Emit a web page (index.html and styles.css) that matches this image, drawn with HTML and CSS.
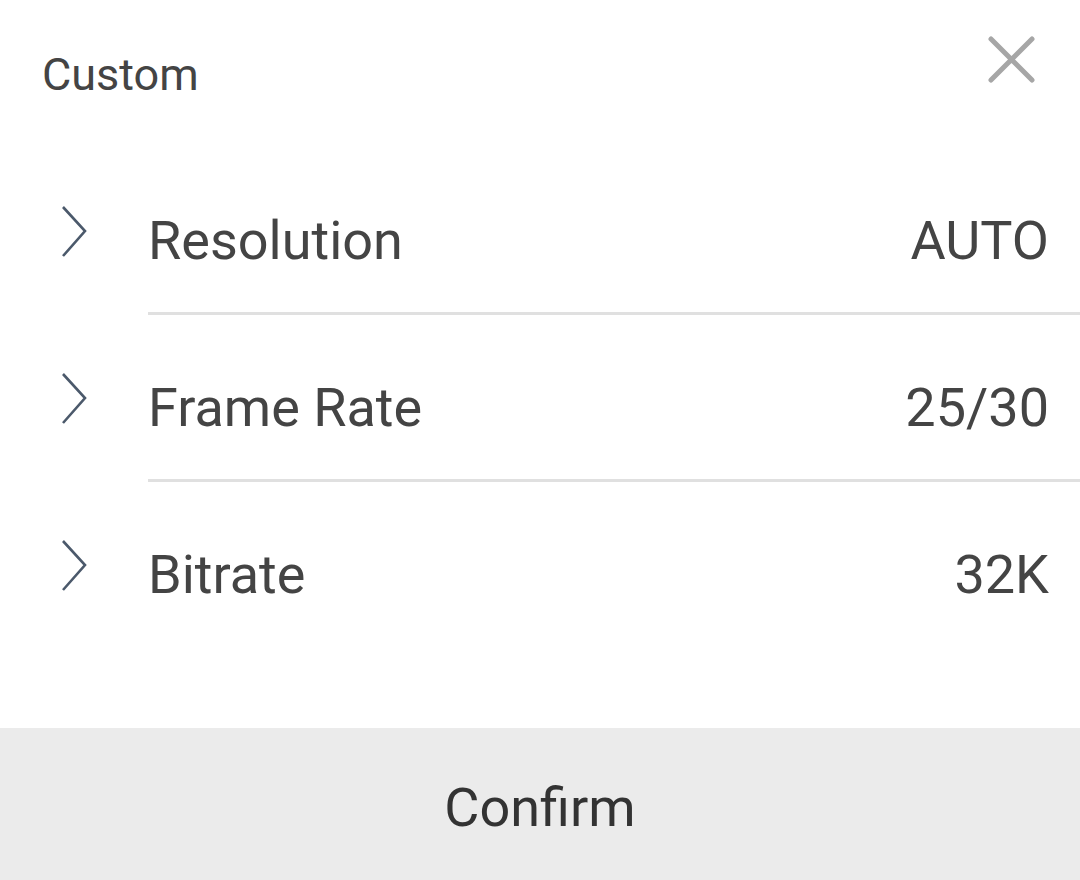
FILE: index.html
```html
<!DOCTYPE html>
<html lang="en">
<head>
    <meta charset="UTF-8">
    <meta name="viewport" content="width=device-width, initial-scale=1.0">
    <title>Custom</title>
    <link rel="stylesheet" href="styles.css">
</head>
<body>
<div class="sheet">
    <div class="header">
        <span class="title">Custom</span>
        <a href="javascript:;" class="close">
            <svg width="50" height="50" viewBox="0 0 50 50">
                <path d="M4 4 L45 45 M45 4 L4 45" stroke="#a6a6a6" stroke-width="5" stroke-linecap="round" fill="none"/>
            </svg>
        </a>
    </div>
    <ul class="list">
        <li class="row">
            <div class="arrow">
                <svg width="28" height="54" viewBox="0 0 28 54">
                    <polyline points="2,2 24,26 2,51" stroke="#4b596b" stroke-width="2.6" fill="none" stroke-linejoin="miter"/>
                </svg>
            </div>
            <div class="cell">
                <span class="label">Resolution</span>
                <span class="value">AUTO</span>
            </div>
        </li>
        <li class="row">
            <div class="arrow">
                <svg width="28" height="54" viewBox="0 0 28 54">
                    <polyline points="2,2 24,26 2,51" stroke="#4b596b" stroke-width="2.6" fill="none" stroke-linejoin="miter"/>
                </svg>
            </div>
            <div class="cell">
                <span class="label">Frame Rate</span>
                <span class="value">25/30</span>
            </div>
        </li>
        <li class="row">
            <div class="arrow">
                <svg width="28" height="54" viewBox="0 0 28 54">
                    <polyline points="2,2 24,26 2,51" stroke="#4b596b" stroke-width="2.6" fill="none" stroke-linejoin="miter"/>
                </svg>
            </div>
            <div class="cell last">
                <span class="label">Bitrate</span>
                <span class="value">32K</span>
            </div>
        </li>
    </ul>
    <div class="footer">
        <a href="javascript:;" class="confirm">Confirm</a>
    </div>
</div>
</body>
</html>
```

FILE: styles.css
```css
*{
    margin: 0;
    padding: 0;
    box-sizing: border-box;
}
body{
    background: #fff;
    font-family: Roboto, "Noto Sans", sans-serif;
    color: #444;
}
.sheet{
    width: 1080px;
    height: 880px;
    display: flex;
    flex-direction: column;
}
.header{
    height: 148px;
    display: flex;
    justify-content: space-between;
    align-items: flex-start;
    padding: 0 43px 0 42px;
}
.header .title{
    font-size: 45px;
    line-height: 45px;
    margin-top: 52px;
}
.header .close{
    display: block;
    width: 50px;
    height: 50px;
    margin-top: 35px;
}
.header .close svg{
    display: block;
}
.list{
    list-style: none;
}
.row{
    height: 167px;
    display: flex;
}
.row .arrow{
    width: 148px;
    flex-shrink: 0;
    display: flex;
    align-items: center;
    padding-left: 61px;
}
.row .arrow svg{
    display: block;
}
.row .cell{
    flex: 1;
    display: flex;
    justify-content: space-between;
    align-items: center;
    padding: 22px 31px 0 0;
    border-bottom: 3px solid #e0e0e0;
    font-size: 54px;
    line-height: 54px;
}
.row .cell.last{
    border-bottom: 3px solid transparent;
}
.footer{
    margin-top: auto;
    height: 152px;
    background: #ebebeb;
    display: flex;
    justify-content: center;
    align-items: center;
    padding-top: 7px;
}
.footer .confirm{
    font-size: 54px;
    line-height: 54px;
    color: #333;
    text-decoration: none;
}
```
